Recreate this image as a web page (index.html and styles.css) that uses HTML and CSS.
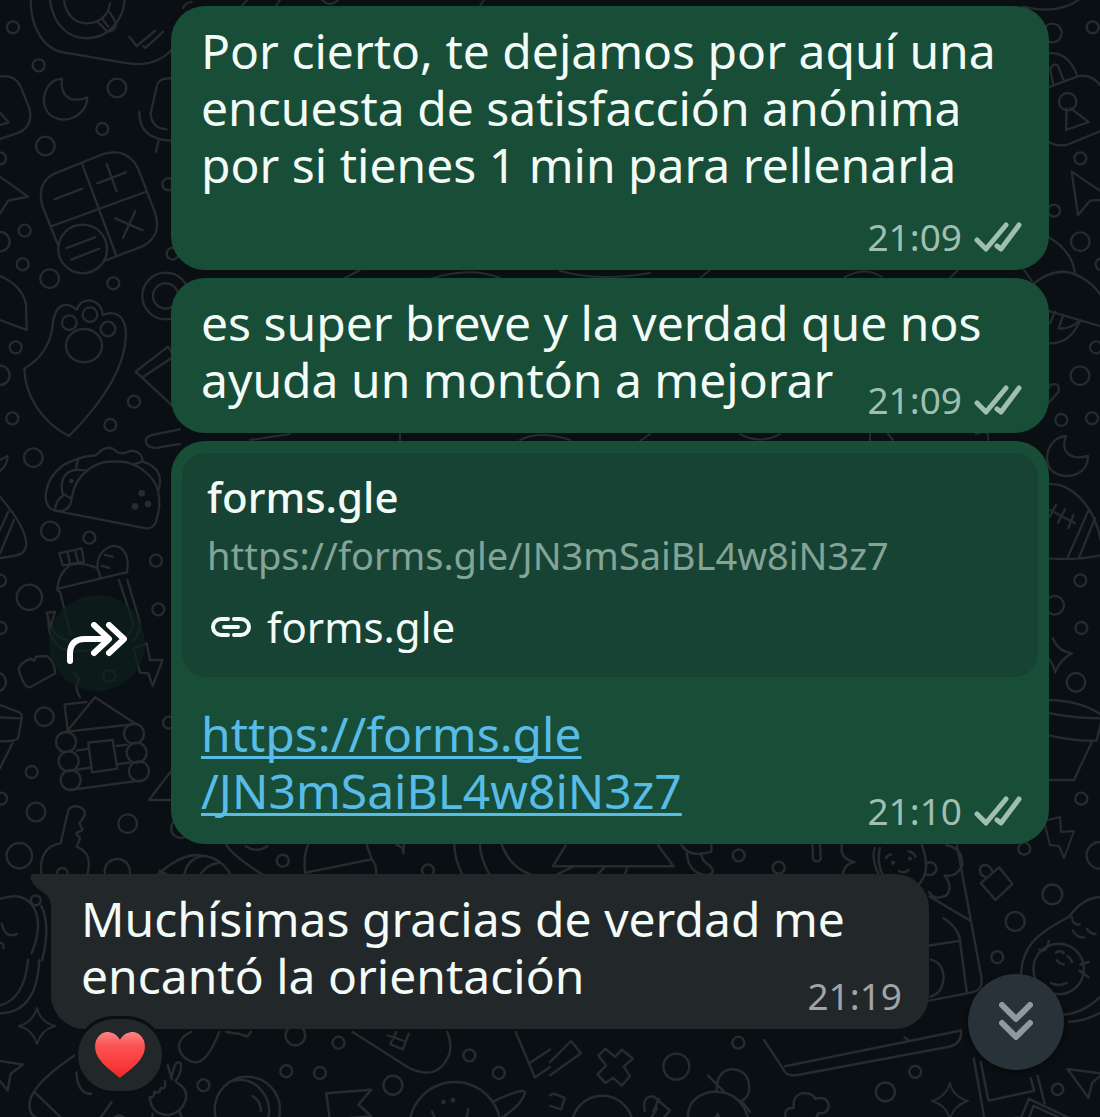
FILE: index.html
```html
<!DOCTYPE html>
<html lang="es">
<head>
    <meta charset="UTF-8">
    <meta name="viewport" content="width=device-width, initial-scale=1.0">
    <title>Chat</title>
    <link rel="stylesheet" href="styles.css">
</head>
<body>
    <svg class="wallpaper" viewBox="0 0 1100 1117" preserveAspectRatio="xMidYMin slice" aria-hidden="true">
        <defs>
            <path id="sparkle" d="M0-18Q3-4 18 0Q4 4 0 18Q-4 4-18 0Q-4-4 0-18Z"/>
            <path id="bolt" d="M-15-17L1-21L2-6L15-7L5 20L0 8L-9 7Z"/>
        </defs>

        <!-- left column, top -->
        <g transform="scale(.3333)">
            <path d="M92 0C92 80 130 150 195 158L370 188C440 202 490 180 520 145M150 0C160 75 205 115 260 115C325 115 370 60 374 0M192 0C198 45 225 70 260 70C300 70 325 45 330 10M293 66L322 95Q348 95 348 68L328 35M308 58L325 80M388 110L410 138L466 92M430 138L436 144L490 95"/>
            <path d="M186 236C135 240 120 300 142 335C180 385 262 350 262 292Q240 302 215 298Q180 285 186 236Z"/>
            <path d="M0 230C40 222 58 245 68 275L88 325C98 365 80 390 50 400L0 417M0 338L26 367L0 375M0 530L84 590L25 602L0 640"/>
            <path d="M520 236Q475 230 470 260L452 340Q455 385 500 388M418 335Q415 420 520 422M475 424L468 455"/>
            <path d="M174 735L128 620C115 575 125 540 165 520L310 462C370 445 405 475 420 520L466 640C480 690 465 720 425 740L315 782M245 488L348 765M156 678L436 576M163 598L247 566M292 550L378 517M320 492L350 574M346 655L428 691M406 633L369 714M200 744L285 712M214 779L298 746"/>
            <path d="M0 828Q65 855 78 912L80 990L0 960"/>
            <circle cx="248" cy="747" r="73"/>
            <circle cx="39" cy="82" r="18"/>
            <circle cx="116" cy="196" r="18"/>
            <circle cx="351" cy="264" r="28"/>
            <circle cx="307" cy="387" r="18"/>
            <circle cx="136" cy="438" r="28"/>
            <circle cx="0" cy="475" r="18"/>
            <circle cx="505" cy="553" r="18"/>
            <circle cx="74" cy="692" r="18"/>
            <circle cx="0" cy="725" r="29"/>
            <circle cx="68" cy="793" r="18"/>
            <circle cx="149" cy="836" r="28"/>
            <circle cx="340" cy="850" r="18"/>
            <circle cx="518" cy="761" r="18"/>
            <circle cx="497" cy="888" r="70"/>
            <circle cx="497" cy="888" r="38"/>
        </g>

        <!-- left column, paw and taco -->
        <g transform="translate(0 290) scale(.3333)">
            <path d="M73 236Q150 190 158 105C165 35 205 35 230 60C245 15 305 25 308 75C345 60 378 75 378 135C375 240 295 350 207 438C130 400 75 320 73 236Z"/>
            <ellipse cx="252" cy="167" rx="54" ry="50"/>
            <circle cx="208" cy="98" r="22"/>
            <circle cx="270" cy="74" r="22"/>
            <circle cx="324" cy="117" r="22"/>
            <path d="M520 195L504 170L407 245L520 350M430 260L520 200M540 418L460 434Q430 440 440 462Q452 478 478 472L540 462"/>
            <path d="M165 662C120 650 130 570 190 525Q230 505 270 497Q290 500 300 484Q330 462 350 486Q370 495 390 483Q425 480 428 515C475 530 490 560 474 604Q485 650 466 700Q455 720 430 714ZM215 625C225 550 290 510 345 515C410 510 465 560 474 604M165 662Q210 670 215 625M190 615Q165 635 165 660M190 615Q180 590 190 565Q205 530 262 543M235 505L228 535M190 612L212 624M405 522L428 515"/>
            <circle class="dot" cx="425" cy="610" r="10"/>
            <circle class="dot" cx="405" cy="649" r="10"/>
            <circle class="dot" cx="444" cy="642" r="10"/>
            <circle class="dot" cx="214" cy="573" r="7"/>
            <path d="M0 620Q85 720 78 770Q72 795 40 798L0 804M25 665L0 720M42 690L0 790M0 510L22 498Q24 525 0 543"/>
            <path d="M188 826L178 790L245 775L252 815ZM202 785L210 820M225 782L234 815M172 900Q172 855 210 825Q250 815 292 835L302 862M178 895L375 848M292 835Q290 785 335 768C375 765 390 805 380 848M315 795L338 800M305 828L328 834"/>
            <circle cx="47" cy="172" r="18"/>
            <circle cx="0" cy="256" r="29"/>
            <circle cx="37" cy="385" r="18"/>
            <circle cx="402" cy="335" r="18"/>
            <circle cx="331" cy="405" r="18"/>
            <circle cx="100" cy="503" r="28"/>
            <circle cx="151" cy="723" r="28"/>
            <circle cx="268" cy="743" r="18"/>
            <circle cx="468" cy="812" r="18"/>
            <circle cx="0" cy="872" r="18"/>
        </g>

        <!-- left column, cabin and key -->
        <g transform="translate(0 580) scale(.3333)">
            <path d="M172 30L182 38M180 35L212 165M357 0L398 125Q400 160 370 172Q300 215 215 215C165 205 145 170 145 120M382 0L418 120Q425 160 398 182M140 98L165 96L152 140ZM155 140Q165 175 205 180"/>
            <path d="M56 268Q58 250 92 236L102 242L108 230L140 228Q162 240 166 280L90 322Q72 325 56 268Z"/>
            <path d="M400 205L440 190L450 240L488 240L458 318L445 280L420 278ZM220 275L238 298Q220 320 240 352"/>
            <path d="M200 455L285 352L408 432ZM203 450L194 373L260 366M230 512L268 506M225 570L275 562M350 498L380 494M354 552L390 548M208 630L420 602M265 488L338 480L352 566L276 577Z"/>
            <circle cx="198" cy="486" r="30"/>
            <circle cx="206" cy="544" r="30"/>
            <circle cx="212" cy="600" r="30"/>
            <circle cx="402" cy="461" r="30"/>
            <circle cx="410" cy="518" r="30"/>
            <circle cx="417" cy="574" r="30"/>
            <path d="M0 375L60 398Q66 402 66 412L54 475Q50 484 0 484M0 412L64 415M38 488L0 565M520 565L447 660L520 660"/>
            <path d="M125 890C115 830 140 795 182 790L205 690Q215 675 235 680Q262 688 252 710L238 730L248 750L228 760L240 775L230 800C265 815 275 840 260 890"/>
            <circle cx="187" cy="880" r="16"/>
            <circle cx="88" cy="52" r="38"/>
            <circle cx="475" cy="88" r="18"/>
            <circle cx="2" cy="144" r="18"/>
            <circle cx="328" cy="288" r="18"/>
            <circle cx="-10" cy="306" r="28"/>
            <circle cx="133" cy="410" r="28"/>
            <circle cx="507" cy="428" r="18"/>
            <circle cx="95" cy="576" r="18"/>
            <circle cx="3" cy="656" r="18"/>
            <circle cx="108" cy="696" r="28"/>
            <circle cx="383" cy="731" r="28"/>
            <circle cx="58" cy="827" r="38"/>
            <circle cx="352" cy="875" r="38"/>
        </g>

        <!-- right column, top -->
        <g transform="translate(1030) scale(.3333)">
            <path d="M-20 20Q80 45 145 0M30 165Q110 140 142 228M55 262L135 232Q180 215 215 260M70 255L60 205Q75 185 85 200L102 245M55 425Q80 440 110 435L215 392M122 325L176 366L108 390L110 325"/>
            <circle cx="113" cy="305" r="26"/>
            <path d="M125 515L215 575M125 515L144 645L180 602L215 600M50 708Q125 750 134 815M0 860Q80 790 150 830Q190 850 215 890M30 925L215 980M75 935L60 970M100 945L86 985Q120 990 150 960M50 1030Q120 1035 150 962M40 1190L62 1155Q90 1145 86 1175L50 1215"/>
            <circle cx="67" cy="99" r="28"/>
            <circle cx="188" cy="82" r="18"/>
            <circle cx="151" cy="475" r="18"/>
            <circle cx="72" cy="632" r="18"/>
            <circle cx="151" cy="725" r="28"/>
            <circle cx="215" cy="793" r="18"/>
            <circle cx="198" cy="1042" r="18"/>
            <circle cx="150" cy="1127" r="28"/>
            <circle cx="94" cy="1260" r="18"/>
            <circle cx="186" cy="1255" r="18"/>
        </g>

        <!-- right column, middle -->
        <g transform="translate(1030 440) scale(.3333)">
            <path d="M108-12C55-8 35 60 65 92C105 125 175 105 174 48C120 62 90 35 108-12Z"/>
            <path d="M50 132C120 125 190 190 212 300M50 355Q150 362 215 345M176 210L112 355M195 235L146 355M60 210L135 250M78 195L58 232M105 208L84 248M130 225L115 265"/>
            <path d="M50 780Q150 780 215 825M50 818Q130 835 215 835M50 885Q130 905 200 902L215 840M186 905L132 1020L50 1020M68 595Q85 635 126 640Q88 660 76 698Q70 670 50 650"/>
            <circle cx="151" cy="421" r="18"/>
            <circle cx="74" cy="496" r="28"/>
            <circle cx="154" cy="564" r="18"/>
            <circle cx="138" cy="727" r="28"/>
            <circle cx="154" cy="1076" r="18"/>
            <circle cx="210" cy="1246" r="40"/>
        </g>
        <use href="#bolt" x="1059" y="838"/>

        <!-- slivers between the bubbles -->
        <path d="M183 8Q186 2 192 2M240 8L247 0M276 6L280 0M322 0Q330 8 338 0M480 6L484 0M845 277Q865 266 882 277M950 278L958 270M1024 270L1032 281M360 270L345 278M430 279Q470 266 500 278M560 271Q600 282 650 273M700 278L710 270M870 441V433M888 434L893 440M976 434Q990 428 988 440M250 440L290 434M400 434V441M520 440Q540 430 570 440M640 441L650 434M740 434Q760 445 780 434"/>

        <!-- strip above and below the grey bubble -->
        <g transform="translate(0 820) scale(.3508)">
            <path d="M445 160Q520 90 575 102Q630 105 660 160M525 160Q530 115 575 102M568 160Q590 125 625 122M455 145L485 160M645 70Q660 100 755 160M878 70Q862 110 872 160M872 150L1060 112M1045 70L1060 112Q1075 130 1072 160M1130 70L1146 78L1150 95L1152 70M1295 70Q1295 110 1320 160M1368 70Q1370 110 1395 155M1430 70Q1460 150 1540 162"/>
            <path d="M700 75Q732 95 762 75"/>
            <circle cx="806" cy="116" r="17"/>
            <circle cx="1220" cy="144" r="17"/>
            <circle cx="515" cy="24" r="27"/>
            <circle cx="102" cy="229" r="14"/>
            <path d="M0 225C70 200 112 240 108 310Q105 345 90 380M118 245Q145 300 120 400M5 295Q15 340 48 325M0 350Q12 350 10 365"/>
        </g>
        <g transform="translate(0 960) scale(.3508)">
            <path d="M80 0Q70 110 0 130M112 0Q105 150 0 152M0 288L65 298L30 325L22 372L0 345M215 270Q120 335 97 375L195 470M97 375Q75 410 90 440L130 470M80 470Q110 445 145 470M318 405L272 470M218 320Q220 380 260 382"/>
            <path d="M478 300L490 340M490 330Q500 280 515 295Q520 320 500 345M505 350Q535 365 530 395Q520 435 480 442Q430 440 427 390Q440 395 440 375Q455 385 458 365Q475 370 470 345M435 438L432 470M512 432L525 470"/>
            <path d="M625 205Q590 295 555 292Q510 280 510 240Q520 215 545 205M645 205L680 210L705 218L715 205M1005 205L1170 310Q1250 345 1280 270Q1290 240 1275 205M1105 215L1150 230M1130 205L1112 240L1148 255L1165 210M1470 205L1525 335L1568 305M1508 295L1568 255"/>
            <path d="M930 380L1058 370L1022 412L1058 445L942 455M930 380L942 470M720 388Q742 400 744 430M665 345C745 320 800 440 745 470"/>
            <circle cx="705" cy="426" r="93"/>
            <circle cx="1297" cy="478" r="130"/>
            <path d="M1408 402Q1500 360 1496 380Q1490 410 1430 450M1232 432Q1242 470 1285 480Q1330 475 1335 425"/>
            <circle class="dot" cx="1264" cy="405" r="7"/>
            <circle class="dot" cx="1291" cy="400" r="7"/>
            <circle cx="842" cy="215" r="28"/>
            <circle cx="965" cy="236" r="17"/>
            <circle cx="816" cy="317" r="17"/>
            <circle cx="912" cy="322" r="17"/>
            <circle cx="580" cy="357" r="17"/>
            <circle cx="340" cy="460" r="17"/>
            <circle cx="1338" cy="272" r="17"/>
            <circle cx="1422" cy="322" r="17"/>
            <circle cx="1120" cy="357" r="27"/>
        </g>
        <use href="#sparkle" x="37" y="1026"/>

        <!-- bottom right: faces, laptop, photos -->
        <g transform="translate(550 820) scale(.3508)">
            <path d="M45 72L8 132L352 132L308 72M62 135L10 160M155 135L130 162M220 135L212 162M375 72Q400 110 460 90V72M390 95Q395 155 450 157Q475 150 455 130Q430 115 432 95M748 72L750 112Q760 125 772 112L770 72"/>
            <path d="M832 72Q825 110 868 120Q835 125 834 162M925 80Q915 115 940 160M940 80Q930 120 950 162M1060 72Q1090 150 1045 190M958 108Q962 100 972 98M1022 90Q1035 90 1042 105M995 145Q1010 155 1022 142M1072 128C1080 115 1100 120 1102 140Q1095 162 1072 155M1130 72Q1178 80 1175 130Q1160 165 1125 158Q1150 190 1130 215Q1095 232 1080 205M1160 72L1230 450Q1235 485 1200 492L1082 515M1082 218L1195 285M1122 280Q1170 310 1170 355L1188 490M1082 358L1165 345M1085 398Q1120 405 1122 450Q1118 495 1085 503"/>
            <path d="M1228 180L1280 135L1318 182L1270 228ZM1228 155Q1220 130 1240 128Q1255 128 1262 148M1228 155L1245 165"/>
            <path d="M1568 220Q1520 220 1480 275C1400 320 1340 350 1342 460M1480 575Q1520 575 1568 550M1465 555Q1520 550 1568 505M1488 278Q1490 300 1510 298M1490 315Q1500 335 1522 335M1530 310Q1540 325 1555 325M1395 370Q1415 380 1422 345M1428 465Q1450 475 1472 465M1442 378Q1455 370 1465 380M1475 388Q1485 395 1488 405M1445 400Q1450 410 1465 412M1512 412L1535 405M1510 430L1535 448"/>
            <circle cx="1450" cy="425" r="72"/>
            <circle class="dot" cx="978" cy="122" r="6"/>
            <circle class="dot" cx="1026" cy="110" r="6"/>
            <path d="M610 627L670 718Q680 732 710 726L1130 648Q1175 640 1172 600L670 702M1010 620L1022 627"/>
            <path d="M0 690L60 630L88 665L0 728M138 672L158 652L185 675L205 655L236 680L210 703L228 730L205 757L180 735L158 750L135 725L160 700Z"/>
            <path d="M0 785L10 780L42 792L32 825L0 815M120 850L182 870L130 905ZM270 830Q262 785 295 788L342 828L290 890M305 822L270 880M310 795L295 830"/>
            <circle cx="149" cy="873" r="87"/>
            <path d="M405 891C365 800 440 770 480 775C545 780 575 840 562 891M475 770Q475 715 520 710Q570 715 568 770Q565 790 548 800M450 728L500 778M545 800L570 832M385 872L415 880Q455 880 478 838Q490 875 530 880L562 891"/>
            <path d="M672 850Q665 820 695 820Q690 785 722 778Q755 780 755 795Q790 785 795 815Q790 840 765 835Q755 865 735 860Q715 880 695 870Q675 868 672 850ZM918 872L975 885M918 872L925 891M985 880Q1030 870 1075 891"/>
            <path d="M1208 680L1240 860L1335 848M1228 690L1250 800L1380 772L1370 735M1390 730L1410 808M1325 891L1365 795L1520 868L1510 891M1350 891L1378 815L1490 865M1475 710L1568 722M1475 710L1535 792L1545 750L1568 730"/>
            <circle cx="538" cy="101" r="17"/>
            <circle cx="652" cy="136" r="17"/>
            <circle cx="1352" cy="82" r="17"/>
            <circle cx="1432" cy="212" r="28"/>
            <circle cx="1326" cy="289" r="27"/>
            <circle cx="1275" cy="391" r="17"/>
            <circle cx="537" cy="635" r="17"/>
            <circle cx="360" cy="703" r="37"/>
            <circle cx="956" cy="775" r="27"/>
            <circle cx="1041" cy="718" r="17"/>
            <circle cx="1447" cy="768" r="16"/>
            <circle cx="829" cy="885" r="17"/>
        </g>
        <use href="#sparkle" x="950" y="1101"/>
    </svg>

    <svg class="symbols" aria-hidden="true">
        <symbol id="checks" viewBox="0 0 48 30">
            <path d="M3 18L12 27L32 3M23 24L27 27L45 3"/>
        </symbol>
    </svg>

    <main class="chat">
        <article class="bubble sent">
            <div class="body stacked">
                <p class="text">Por cierto, te dejamos por aquí una<br>encuesta de satisfacción anónima<br>por si tienes 1 min para rellenarla</p>
                <div class="meta">
                    <time>21:09</time>
                    <svg class="checks" role="img" aria-label="Entregado"><use href="#checks"/></svg>
                </div>
            </div>
        </article>

        <article class="bubble sent">
            <div class="body">
                <p class="text">es super breve y la verdad que nos<br>ayuda un montón a mejorar</p>
                <div class="meta">
                    <time>21:09</time>
                    <svg class="checks" role="img" aria-label="Entregado"><use href="#checks"/></svg>
                </div>
            </div>
        </article>

        <div class="row">
            <button class="forward" type="button" aria-label="Reenviar">
                <svg viewBox="0 0 60 42">
                    <path d="M3 39V32Q3 17 18 17H40M27 3L42 17L27 31M42 3L57 17L42 31"/>
                </svg>
            </button>
            <article class="bubble sent">
                <div class="preview">
                    <h2 class="preview-title">forms.gle</h2>
                    <p class="preview-url">https://forms.gle/JN3mSaiBL4w8iN3z7</p>
                    <p class="preview-site">
                        <svg viewBox="0 0 42 22" aria-hidden="true">
                            <path d="M18 3H11A8 8 0 0 0 11 19H18M24 3H31A8 8 0 0 1 31 19H24M14 11H28"/>
                        </svg>
                        forms.gle
                    </p>
                </div>
                <div class="body">
                    <p class="text"><a href="https://forms.gle/JN3mSaiBL4w8iN3z7">https://forms.gle<br>/JN3mSaiBL4w8iN3z7</a></p>
                    <div class="meta">
                        <time>21:10</time>
                        <svg class="checks" role="img" aria-label="Entregado"><use href="#checks"/></svg>
                    </div>
                </div>
            </article>
        </div>

        <article class="bubble received">
            <svg class="tail" viewBox="0 0 22 32" aria-hidden="true">
                <path d="M22 0H4Q-2 1 2 8Q8 16 14 19Q21 24 21 32H22Z"/>
            </svg>
            <div class="body">
                <p class="text">Muchísimas gracias de verdad me<br>encantó la orientación</p>
                <div class="meta">
                    <time>21:19</time>
                </div>
            </div>
            <button class="reaction" type="button" aria-label="Reacción: corazón">
                <svg viewBox="0 0 52 48">
                    <defs>
                        <linearGradient id="heart" x1="0" y1="0" x2="0" y2="1">
                            <stop offset="0" stop-color="#ff8585"/>
                            <stop offset=".3" stop-color="#fb5252"/>
                            <stop offset=".7" stop-color="#fc3b3b"/>
                            <stop offset="1" stop-color="#e02a2a"/>
                        </linearGradient>
                    </defs>
                    <path d="M26 8C22 1 16 0 12 0C5 1 0 7 0 15C0 29 14 38 26 48C38 38 52 29 52 15C52 7 47 1 40 0C36 0 30 1 26 8Z" fill="url(#heart)"/>
                </svg>
            </button>
        </article>

        <button class="scroll-down" type="button" aria-label="Ir al final">
            <svg viewBox="0 0 34 40">
                <path d="M3 3L17 17L31 3M3 21L17 35L31 21"/>
            </svg>
        </button>
    </main>
</body>
</html>
```

FILE: styles.css
```css
* {
    box-sizing: border-box;
}
body {
    margin: 0;
    font-family: 'Noto Sans', sans-serif;
    background-color: #0a0f13;
    color: #f3fbf7;
}
p, h2 {
    margin: 0;
}
button {
    display: flex;
    align-items: center;
    justify-content: center;
    padding: 0;
    border: none;
    cursor: pointer;
}
svg path, svg circle, svg ellipse {
    stroke-linecap: round;
    stroke-linejoin: round;
}

/* doodle background */
.wallpaper {
    position: absolute;
    inset: 0;
    width: 100%;
    height: 100%;
    fill: none;
    stroke: #272b2e;
    stroke-width: 2px;
}
.wallpaper g {
    stroke-width: 7px;
}
.wallpaper .dot {
    fill: #272b2e;
    stroke: none;
}
.symbols {
    position: absolute;
    width: 0;
    height: 0;
}

.chat {
    position: relative;
    display: flex;
    flex-direction: column;
    gap: 8px;
    min-height: 100vh;
    padding: 6px 51px 88px 49px;
}
.row {
    display: flex;
    align-items: center;
    gap: 26px;
}
.bubble {
    position: relative;
    border-radius: 34px;
}
.sent {
    margin-left: 122px;
    background-color: #184d38;
}
.row .sent {
    flex: 1;
    margin-left: 0;
    padding-top: 12px;
}
.received {
    margin: 22px 120px 0 2px;
    border-top-left-radius: 0;
    background-color: #22272a;
}
.body {
    display: flex;
    justify-content: space-between;
    align-items: flex-end;
    padding: 16px 27px 14px 30px;
}
.stacked {
    flex-direction: column;
    align-items: stretch;
    gap: 14px;
}
/* the first line may run on above the time */
.text {
    flex: 1;
    min-width: 0;
    margin-bottom: 11px;
    font-size: 48px;
    line-height: 57px;
    white-space: nowrap;
}
.text a {
    color: #58bce6;
    text-decoration-thickness: 3px;
    text-underline-offset: 4px;
    text-decoration-skip-ink: none;
}
.meta {
    display: flex;
    align-items: center;
    justify-content: flex-end;
    gap: 12px;
    color: #a0bfb0;
    font-size: 37px;
    line-height: 38px;
}
.received .meta {
    color: #a0a4a7;
}
.checks {
    width: 48px;
    height: 30px;
    fill: none;
    stroke: #a0bfb0;
    stroke-width: 5px;
}

/* link preview card */
.preview {
    margin: 0 11px 12px;
    padding: 16px 25px 22px;
    border-radius: 24px;
    background-color: #174334;
}
.preview-title {
    font-size: 42px;
    font-weight: 500;
    line-height: 56px;
}
.preview-url {
    margin: 5px 0 19px;
    color: #84a497;
    font-size: 38px;
    line-height: 50px;
}
.preview-site {
    display: flex;
    align-items: center;
    gap: 15px;
    font-size: 42px;
    line-height: 56px;
}
.preview-site svg {
    width: 42px;
    height: 22px;
    margin-left: 3px;
    fill: none;
    stroke: #f3fbf7;
    stroke-width: 4px;
}

.forward {
    width: 96px;
    height: 96px;
    border-radius: 50%;
    background-color: rgba(13, 31, 30, 0.7);
    z-index: 1;
}
.forward svg {
    width: 60px;
    height: 42px;
    fill: none;
    stroke: #fff;
    stroke-width: 6px;
}
.tail {
    position: absolute;
    top: 0;
    left: -21px;
    width: 22px;
    height: 32px;
    fill: #22272a;
}
.reaction {
    position: absolute;
    top: 142px;
    left: 24px;
    width: 90px;
    height: 78px;
    border: 3px solid #0a0f13;
    border-radius: 39px;
    background-color: #22272a;
}
.reaction svg {
    width: 52px;
    height: 46px;
}
.scroll-down {
    position: absolute;
    right: 36px;
    bottom: 47px;
    width: 96px;
    height: 96px;
    border-radius: 50%;
    background-color: #283339;
    box-shadow: 0 2px 6px rgba(0, 0, 0, 0.4);
}
.scroll-down svg {
    width: 34px;
    height: 40px;
    fill: none;
    stroke: #8e9a9f;
    stroke-width: 6px;
}
```
